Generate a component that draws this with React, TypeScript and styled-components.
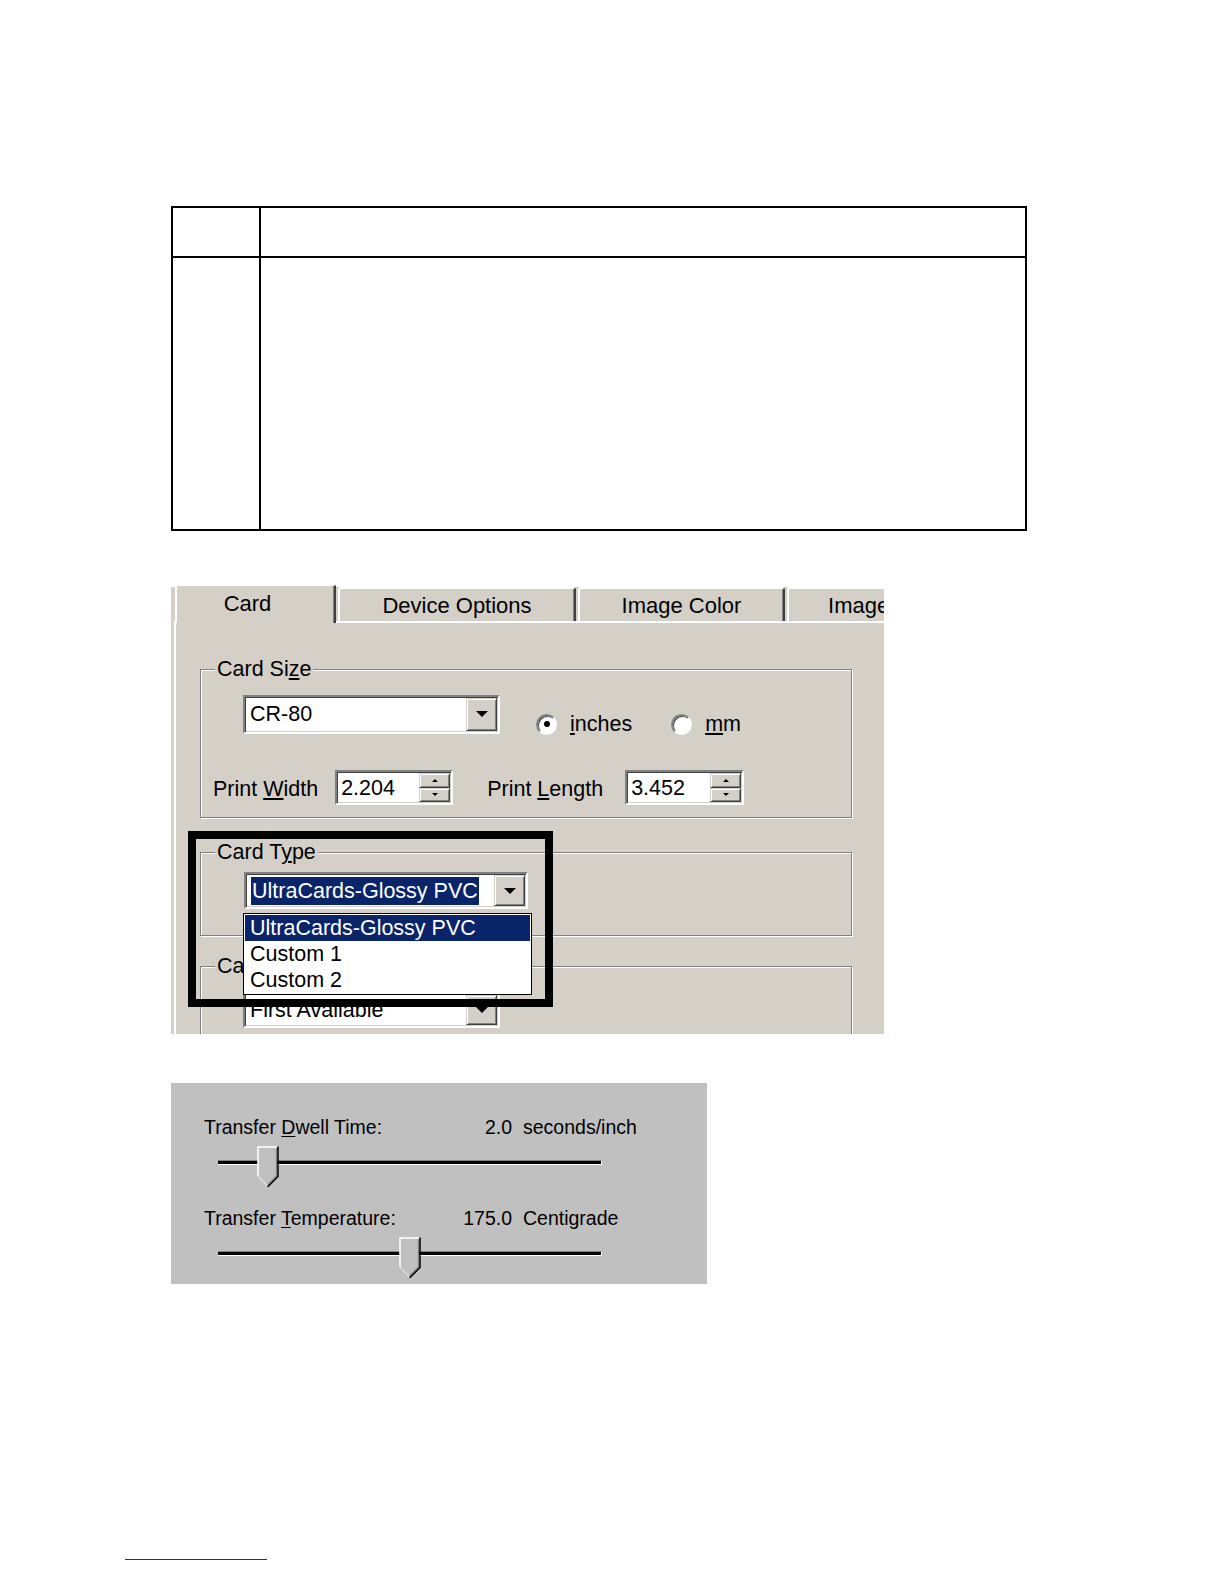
import React from 'react'
import styled, { createGlobalStyle } from 'styled-components'

const winFont = `'Liberation Sans', Arial, sans-serif`

const GlobalStyle = createGlobalStyle`
  html, body {
    margin: 0;
    padding: 0;
    background: #fff;
  }
  body {
    font-family: ${winFont};
    color: #000;
  }
  u {
    text-underline-offset: 2px;
  }
`

const Page = styled.div`
  padding-top: 206px;
  display: flex;
  flex-direction: column;
`

/* empty ruled table at the top of the page */
const Table = styled.table`
  margin-left: 171px;
  width: 856px;
  border-collapse: collapse;
  border: 2px solid #000;

  td {
    border: 2px solid #000;
    padding: 0;
  }
`

const NumCell = styled.td`
  width: 86px;
`

const Row = styled.tr<{ $h: number }>`
  height: ${(p) => p.$h}px;
`

/* the printer dialog screenshot */
const Dialog = styled.div`
  position: relative;
  margin: 48px 0 0 171px;
  width: 713px;
  height: 455px;
  overflow: hidden;
  background: #d4d0c8;
  display: flex;
  flex-direction: column;
  font-size: 21.5px;
  line-height: 26px;
`

const TabStrip = styled.div`
  flex-shrink: 0;
  display: flex;
  align-items: flex-end;
  height: 42px;
  padding-left: 4px;
  background: linear-gradient(#fff 0 8px, #d4d0c8 8px);
`

const Tab = styled.div<{ $active?: boolean; $w: number }>`
  flex-shrink: 0;
  position: relative;
  z-index: ${(p) => (p.$active ? 2 : 1)};
  box-sizing: border-box;
  width: ${(p) => p.$w}px;
  height: ${(p) => (p.$active ? 39 : 34)}px;
  margin: 0 0 ${(p) => (p.$active ? -2 : 0)}px ${(p) => (p.$active ? 0 : 2)}px;
  padding: ${(p) => (p.$active ? '5px 16px 0 0' : '4px 0 0')};
  background: #d4d0c8;
  border-top: 2px solid #fff;
  border-left: 2px solid #fff;
  border-right: 2px solid #404040;
  box-shadow: inset -1px 0 0 #808080;
  border-radius: 3px 3px 0 0;
  font-size: 22px;
  text-align: center;
  white-space: nowrap;
  overflow: hidden;
`

const Panel = styled.div`
  flex: 1;
  margin-left: 3px;
  border-top: 2px solid #fff;
  border-left: 2px solid #fff;
  padding: 33px 0 0 24px;
  display: flex;
  flex-direction: column;
`

const Group = styled.fieldset<{ $mt?: number }>`
  flex-shrink: 0;
  margin: ${(p) => p.$mt ?? 0}px 0 0;
  padding: 0;
  width: 652px;
  min-inline-size: 0;
  box-sizing: border-box;
  border: 1px solid #808080;
  box-shadow: inset 1px 1px 0 #fff, 1px 1px 0 #fff;
`

const Legend = styled.legend`
  margin-left: 14px;
  padding: 0 2px;
  background: #d4d0c8;
  line-height: 26px;
`

const GroupBody = styled.div<{ $pad: string }>`
  padding: ${(p) => p.$pad};
  display: flex;
  flex-direction: column;
`

const FieldRow = styled.div<{ $mt?: number; $ml?: number }>`
  display: flex;
  align-items: center;
  margin: ${(p) => p.$mt ?? 0}px 0 0 ${(p) => p.$ml ?? 0}px;
`

const sunken = `
  border: 2px solid;
  border-color: #808080 #fff #fff #808080;
  box-shadow: inset 1px 1px 0 #404040, inset -1px -1px 0 #d4d0c8;
`

const raised = `
  background: #d4d0c8;
  border: 1px solid;
  border-color: #d4d0c8 #404040 #404040 #d4d0c8;
  box-shadow: inset 1px 1px 0 #fff, inset -1px -1px 0 #808080;
`

const Combo = styled.div<{ $w: number; $h: number }>`
  position: relative;
  flex-shrink: 0;
  display: flex;
  box-sizing: border-box;
  width: ${(p) => p.$w}px;
  height: ${(p) => p.$h}px;
  background: #fff;
  ${sunken}
`

const ComboText = styled.div`
  flex: 1;
  display: flex;
  align-items: center;
  padding-left: 5px;
  white-space: nowrap;
  overflow: hidden;
`

const Highlight = styled.span`
  background: #0a246a;
  color: #fff;
  line-height: 28px;
  padding: 0 1px;
`

const DropButton = styled.div`
  width: 31px;
  margin: 1px;
  box-sizing: border-box;
  ${raised}
  display: flex;
  align-items: center;
  justify-content: center;
`

const Arrow = styled.span<{ $dir?: 'up' | 'down'; $size?: number }>`
  width: 0;
  height: 0;
  border-left: ${(p) => p.$size ?? 6}px solid transparent;
  border-right: ${(p) => p.$size ?? 6}px solid transparent;
  ${(p) =>
    p.$dir === 'up'
      ? `border-bottom: ${p.$size ?? 6}px solid #000;`
      : `border-top: ${p.$size ?? 6}px solid #000;`}
`

const DropList = styled.ul`
  position: absolute;
  z-index: 3;
  top: calc(100% + 6px);
  left: -3px;
  width: 289px;
  box-sizing: border-box;
  margin: 0;
  padding: 1px;
  list-style: none;
  background: #fff;
  border: 1px solid #000;
`

const DropItem = styled.li<{ $selected?: boolean }>`
  height: 26px;
  line-height: 26px;
  padding-left: 5px;
  white-space: nowrap;
  background: ${(p) => (p.$selected ? '#0a246a' : '#fff')};
  color: ${(p) => (p.$selected ? '#fff' : '#000')};
`

const Radio = styled.label<{ $ml: number }>`
  display: flex;
  align-items: center;
  gap: 13px;
  margin: 20px 0 0 ${(p) => p.$ml}px;
`

const RadioCircle = styled.span<{ $checked?: boolean }>`
  width: 21px;
  height: 21px;
  box-sizing: border-box;
  border-radius: 50%;
  background: #fff;
  border: 2px solid;
  border-color: #808080 #fff #fff #808080;
  box-shadow: inset 1px 1px 0 #404040;
  display: flex;
  align-items: center;
  justify-content: center;

  &::after {
    content: '';
    width: 6px;
    height: 6px;
    border-radius: 50%;
    background: ${(p) => (p.$checked ? '#000' : 'transparent')};
  }
`

const FieldLabel = styled.span<{ $ml?: number; $mr: number }>`
  margin: 2px ${(p) => p.$mr}px 0 ${(p) => p.$ml ?? 0}px;
  white-space: nowrap;
`

const SpinBox = styled.div<{ $w: number }>`
  flex-shrink: 0;
  display: flex;
  box-sizing: border-box;
  width: ${(p) => p.$w}px;
  height: 35px;
  background: #fff;
  ${sunken}
`

const SpinText = styled.div`
  flex: 1;
  padding: 3px 0 0 4px;
`

const SpinButtons = styled.div`
  width: 31px;
  display: flex;
  flex-direction: column;
  margin: 1px;
`

const SpinButton = styled.div`
  flex: 1;
  box-sizing: border-box;
  ${raised}
  display: flex;
  align-items: center;
  justify-content: center;
`

const Annotation = styled.div`
  position: absolute;
  z-index: 4;
  left: 17px;
  top: 252px;
  width: 365px;
  height: 176px;
  box-sizing: border-box;
  border: 8px solid #000;
  pointer-events: none;
`

/* the slider screenshot */
const SliderPanel = styled.div`
  margin: 49px 0 0 171px;
  width: 536px;
  height: 201px;
  box-sizing: border-box;
  padding: 31px 0 0 33px;
  background: #c0c0c0;
  display: flex;
  flex-direction: column;
  font-size: 19.5px;
`

const SliderLabelRow = styled.div<{ $mt: number }>`
  display: flex;
  line-height: 26px;
  margin-top: ${(p) => p.$mt}px;
  white-space: nowrap;
`

const SliderLabel = styled.span`
  width: 256px;
`

const SliderValue = styled.span`
  width: 52px;
  margin-right: 11px;
  text-align: right;
`

const Slider = styled.div`
  position: relative;
  margin: 6px 0 0 14px;
  width: 384px;
  height: 41px;
`

const Track = styled.div`
  position: absolute;
  left: 0;
  right: 0;
  top: 14px;
  height: 3px;
  background: #000;
  border-top: 1px solid #808080;
  border-bottom: 1px solid #fff;
  border-right: 1px solid #fff;
`

const Thumb = styled.svg`
  position: absolute;
  top: 0;
  transform: translateX(-50%);
`

const FootnoteRule = styled.div`
  margin: 275px 0 0 125px;
  width: 142px;
  height: 1px;
  background: #2b2b86;
`

const tabs = [
  { label: 'Card', w: 161, active: true },
  { label: 'Device Options', w: 238 },
  { label: 'Image Color', w: 207 },
  { label: 'Image Transfer', w: 230 },
]

const sliders = [
  { key: 'dwell', label: <>Transfer <u>D</u>well Time:</>, value: 2.0, unit: 'seconds/inch', min: 0.5, max: 12, mt: 0 },
  { key: 'temp', label: <>Transfer <u>T</u>emperature:</>, value: 175.0, unit: 'Centigrade', min: 100, max: 250, mt: 18 },
]

function SliderThumb({ pct }: { pct: number }) {
  return (
    <Thumb width="22" height="41" viewBox="0 0 22 41" style={{ left: `${pct}%` }}>
      <path d="M1 1H20V30L10.5 40L1 30Z" fill="#c0c0c0" />
      <path d="M1 30V1H20" stroke="#fff" strokeWidth="1.5" fill="none" />
      <path d="M1 30L10.5 40" stroke="#dfdfdf" strokeWidth="1.2" fill="none" />
      <path d="M19.5 2V30L10.5 39" stroke="#808080" strokeWidth="1.2" fill="none" />
      <path d="M21 0.5V30.5L10.5 41" stroke="#000" strokeWidth="1.5" fill="none" />
    </Thumb>
  )
}

function Spin({ value, w }: { value: string; w: number }) {
  return (
    <SpinBox $w={w}>
      <SpinText>{value}</SpinText>
      <SpinButtons>
        <SpinButton>
          <Arrow $dir="up" $size={3} />
        </SpinButton>
        <SpinButton>
          <Arrow $dir="down" $size={3} />
        </SpinButton>
      </SpinButtons>
    </SpinBox>
  )
}

export default function App() {
  return (
    <Page>
      <GlobalStyle />
      <Table>
        <tbody>
          <Row $h={50}>
            <NumCell />
            <td />
          </Row>
          <Row $h={273}>
            <NumCell />
            <td />
          </Row>
        </tbody>
      </Table>

      <Dialog>
        <TabStrip>
          {tabs.map((t) => (
            <Tab key={t.label} $w={t.w} $active={t.active}>
              {t.label}
            </Tab>
          ))}
        </TabStrip>
        <Panel>
          <Group>
            <Legend>
              Card Si<u>z</u>e
            </Legend>
            <GroupBody $pad="9px 0 12px 12px">
              <FieldRow $ml={30}>
                <Combo $w={257} $h={39}>
                  <ComboText>CR-80</ComboText>
                  <DropButton>
                    <Arrow />
                  </DropButton>
                </Combo>
                <Radio $ml={36}>
                  <RadioCircle $checked />
                  <span>
                    <u>i</u>nches
                  </span>
                </Radio>
                <Radio $ml={39}>
                  <RadioCircle />
                  <span>
                    <u>m</u>m
                  </span>
                </Radio>
              </FieldRow>
              <FieldRow $mt={33}>
                <FieldLabel $mr={17}>
                  Print <u>W</u>idth
                </FieldLabel>
                <Spin value="2.204" w={118} />
                <FieldLabel $ml={34} $mr={22}>
                  Print <u>L</u>ength
                </FieldLabel>
                <Spin value="3.452" w={119} />
              </FieldRow>
            </GroupBody>
          </Group>

          <Group $mt={21}>
            <Legend>
              Card T<u>y</u>pe
            </Legend>
            <GroupBody $pad="7px 0 26px 43px">
              <Combo $w={284} $h={37}>
                <ComboText>
                  <Highlight>UltraCards-Glossy PVC</Highlight>
                </ComboText>
                <DropButton>
                  <Arrow />
                </DropButton>
                <DropList>
                  <DropItem $selected>UltraCards-Glossy PVC</DropItem>
                  <DropItem>Custom 1</DropItem>
                  <DropItem>Custom 2</DropItem>
                </DropList>
              </Combo>
            </GroupBody>
          </Group>

          <Group $mt={17}>
            <Legend>Card Feed</Legend>
            <GroupBody $pad="13px 0 20px 42px">
              <Combo $w={257} $h={36}>
                <ComboText>First Available</ComboText>
                <DropButton>
                  <Arrow />
                </DropButton>
              </Combo>
            </GroupBody>
          </Group>
        </Panel>
        <Annotation />
      </Dialog>

      <SliderPanel>
        {sliders.map((s) => (
          <React.Fragment key={s.key}>
            <SliderLabelRow $mt={s.mt}>
              <SliderLabel>{s.label}</SliderLabel>
              <SliderValue>{s.value.toFixed(1)}</SliderValue>
              <span>{s.unit}</span>
            </SliderLabelRow>
            <Slider>
              <Track />
              <SliderThumb pct={((s.value - s.min) / (s.max - s.min)) * 100} />
            </Slider>
          </React.Fragment>
        ))}
      </SliderPanel>

      <FootnoteRule />
    </Page>
  )
}
